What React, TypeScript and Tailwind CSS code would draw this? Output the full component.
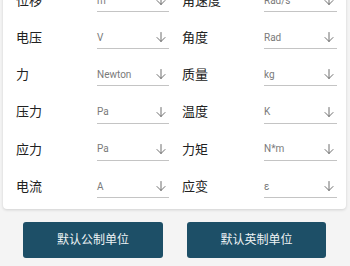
import React from "react";

const rows: [string, string, string, string][] = [
  ["位移", "m", "角速度", "Rad/s"],
  ["电压", "V", "角度", "Rad"],
  ["力", "Newton", "质量", "kg"],
  ["压力", "Pa", "温度", "K"],
  ["应力", "Pa", "力矩", "N*m"],
  ["电流", "A", "应变", "ε"],
];

function Arrow() {
  return (
    <svg width="12" height="12" viewBox="0 0 24 24" fill="none" stroke="#5f5f5f" strokeWidth="1.8" strokeLinecap="round" strokeLinejoin="round">
      <path d="M12 3v18" />
      <path d="M4 13l8 8 8-8" />
    </svg>
  );
}

function Field({ label, value, lw, sw }: { label: string; value: string; lw: string; sw: string }) {
  return (
    <div className="flex items-center">
      <div className={`${lw} text-[13px] text-[#212121]`}>{label}</div>
      <div className={`${sw} h-[23px] flex items-center justify-between border-b border-[#c4c4c4] pr-[2px]`}>
        <span className="text-[10px] text-[#7a7a7a]" style={{ fontFamily: "Roboto, sans-serif" }}>{value}</span>
        <Arrow />
      </div>
    </div>
  );
}

export default function App() {
  return (
    <div
      className="w-[350px] h-[266px] overflow-hidden bg-[#f4f4f4]"
      style={{ fontFamily: "Roboto, 'Noto Sans CJK SC', sans-serif" }}
    >
      <div className="ml-[3px] w-[343px] -mt-[30px] pt-[12px] pb-[4px] bg-white rounded-[4px] shadow-[0_1px_3px_rgba(0,0,0,0.15)]">
        {rows.map((r, i) => (
          <div key={i} className="h-[37.2px] flex items-center pl-[13px]">
            <Field label={r[0]} value={r[1]} lw="w-[81px]" sw="w-[72px]" />
            <div className="w-[13px]" />
            <Field label={r[2]} value={r[3]} lw="w-[82px]" sw="w-[73px]" />
          </div>
        ))}
      </div>
      <div className="flex pl-[23px] gap-[24px] mt-[13px]">
        <button className="w-[140px] h-[36px] rounded-[3px] bg-[#1d4f67] text-[12px] text-[#eef3f5]">
          默认公制单位
        </button>
        <button className="w-[139px] h-[36px] rounded-[3px] bg-[#1d4f67] text-[12px] text-[#eef3f5]">
          默认英制单位
        </button>
      </div>
    </div>
  );
}
